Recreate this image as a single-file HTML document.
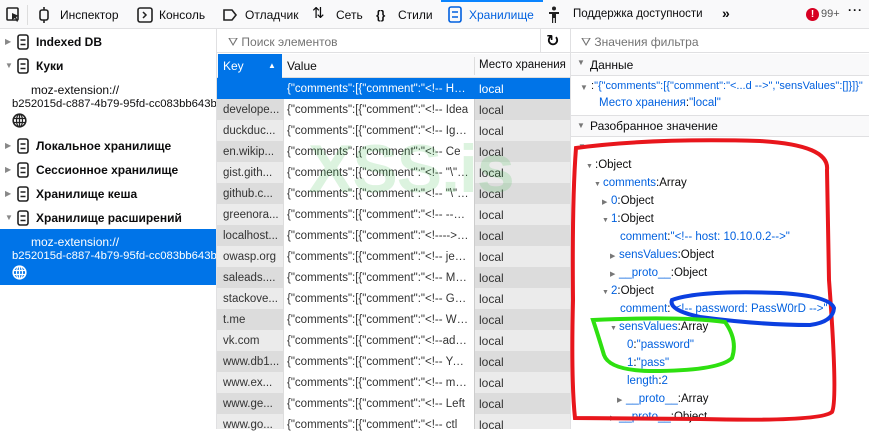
<!DOCTYPE html>
<html><head><meta charset="utf-8">
<style>
*{box-sizing:border-box;margin:0;padding:0}
body{width:869px;height:429px;overflow:hidden;background:#fff;font-family:"Liberation Sans","DejaVu Sans",sans-serif;font-size:12px;color:#0c0c0d;position:relative}
.abs{position:absolute;white-space:nowrap}
.tb{position:absolute;left:0;top:0;width:869px;height:29px;background:#f9f9fa;border-bottom:1px solid #e0e0e2}
.tb span{position:absolute;top:8px;font-size:12px}
.bl{color:#0060df}
.col{position:absolute;line-height:21px;color:#333;font-size:12px}
.col div{overflow:hidden;white-space:nowrap;text-overflow:ellipsis;height:21px}
.tr{font-size:7px;color:#777;display:inline-block;width:9px}
</style></head><body>
<div class="tb">
 <svg class="abs" style="left:6px;top:7px" width="14" height="16"><rect x="1" y="1" width="11" height="12" fill="none" stroke="#222" stroke-width="1.6" rx="1"/><path d="M6 6l7 3-3 1 2 4-1 1-2-4-3 2z" fill="#222"/></svg>
 <div class="abs" style="left:27px;top:5px;width:1px;height:20px;background:#ddd"></div>
 <svg class="abs" style="left:37px;top:7px" width="14" height="16"><rect x="3" y="3" width="8" height="10" rx="2" fill="none" stroke="#222" stroke-width="1.6"/><path d="M7 0v3M7 13v3" stroke="#222" stroke-width="1.6"/></svg>
 <span style="left:60px">Инспектор</span>
 <svg class="abs" style="left:137px;top:7px" width="16" height="16"><rect x="1" y="1" width="14" height="14" rx="2" fill="none" stroke="#222" stroke-width="1.6"/><path d="M6 5l3 3-3 3" fill="none" stroke="#222" stroke-width="1.5"/></svg>
 <span style="left:159px">Консоль</span>
 <svg class="abs" style="left:222px;top:7px" width="16" height="16"><path d="M2 3h8l4 5-4 5H2z" fill="none" stroke="#222" stroke-width="1.6"/></svg>
 <span style="left:245px">Отладчик</span>
 <span style="left:312px;font-size:15px;top:4px">⇅</span>
 <span style="left:336px">Сеть</span>
 <span style="left:376px;font-weight:bold">{}</span>
 <span style="left:398px">Стили</span>
 <div class="abs" style="left:441px;top:0;width:102px;height:2px;background:#0a84ff"></div>
 <svg class="abs" style="left:448px;top:6px" width="14" height="17"><rect x="1" y="1" width="12" height="15" rx="2" fill="none" stroke="#0060df" stroke-width="1.6"/><path d="M4 6h6M4 11h6" stroke="#0060df" stroke-width="1.5"/></svg>
 <span style="left:469px;color:#0060df">Хранилище</span>
 <svg class="abs" style="left:548px;top:6px" width="12" height="18"><circle cx="6" cy="2.5" r="2" fill="#222"/><path d="M1 6h10v2H8v9H6.8v-5H5.2v5H4V8H1z" fill="#222"/></svg>
 <span style="left:573px;font-size:11.5px">Поддержка доступности</span>
 <span style="left:722px;font-weight:bold;font-size:14px;top:5px">»</span>
 <div class="abs" style="left:806px;top:8px;width:13px;height:13px;border-radius:50%;background:#d70022;color:#fff;font-size:10px;text-align:center;line-height:13px;font-weight:bold">!</div>
 <span style="left:821px;font-size:11px;top:8px;color:#555">99+</span>
 <span style="left:848px;top:3px;font-weight:bold;letter-spacing:1px">···</span>
</div>

<!-- left panel -->
<div class="abs" style="left:216px;top:29px;width:1px;height:400px;background:#e0e0e2"></div>
<div class="abs" style="left:0;top:229px;width:216px;height:56px;background:#0074e8"></div>
<div class="abs" style="left:0;top:29px;width:216px;height:400px;overflow:hidden">
 <div style="position:relative;top:-29px">
 <div class="abs" style="left:5px;top:37px;color:#888;font-size:8px">▶</div>
 <div class="abs" style="left:5px;top:61px;color:#888;font-size:8px">▼</div>
 <div class="abs" style="left:5px;top:141px;color:#888;font-size:8px">▶</div>
 <div class="abs" style="left:5px;top:165px;color:#888;font-size:8px">▶</div>
 <div class="abs" style="left:5px;top:189px;color:#888;font-size:8px">▶</div>
 <div class="abs" style="left:5px;top:213px;color:#888;font-size:8px">▼</div>
 <svg class="abs" style="left:17px;top:34px" width="12" height="16"><rect x="1" y="1" width="10" height="14" rx="2" fill="none" stroke="#222" stroke-width="1.6"/><path d="M3.5 6h5M3.5 10.5h5" stroke="#222" stroke-width="1.5"/></svg>
 <svg class="abs" style="left:17px;top:58px" width="12" height="16"><rect x="1" y="1" width="10" height="14" rx="2" fill="none" stroke="#222" stroke-width="1.6"/><path d="M3.5 6h5M3.5 10.5h5" stroke="#222" stroke-width="1.5"/></svg>
 <svg class="abs" style="left:17px;top:138px" width="12" height="16"><rect x="1" y="1" width="10" height="14" rx="2" fill="none" stroke="#222" stroke-width="1.6"/><path d="M3.5 6h5M3.5 10.5h5" stroke="#222" stroke-width="1.5"/></svg>
 <svg class="abs" style="left:17px;top:162px" width="12" height="16"><rect x="1" y="1" width="10" height="14" rx="2" fill="none" stroke="#222" stroke-width="1.6"/><path d="M3.5 6h5M3.5 10.5h5" stroke="#222" stroke-width="1.5"/></svg>
 <svg class="abs" style="left:17px;top:186px" width="12" height="16"><rect x="1" y="1" width="10" height="14" rx="2" fill="none" stroke="#222" stroke-width="1.6"/><path d="M3.5 6h5M3.5 10.5h5" stroke="#222" stroke-width="1.5"/></svg>
 <svg class="abs" style="left:17px;top:210px" width="12" height="16"><rect x="1" y="1" width="10" height="14" rx="2" fill="none" stroke="#222" stroke-width="1.6"/><path d="M3.5 6h5M3.5 10.5h5" stroke="#222" stroke-width="1.5"/></svg>
 <div class="abs" style="left:36px;top:35px;font-weight:bold">Indexed DB</div>
 <div class="abs" style="left:36px;top:59px;font-weight:bold">Куки</div>
 <div class="abs" style="left:31px;top:83px">moz-extension://</div>
 <div class="abs" style="left:12px;top:98px;font-size:11.3px">b252015d-c887-4b79-95fd-cc083bb643b</div>
 <svg class="abs" style="left:12px;top:113px" width="15" height="15"><circle cx="7.5" cy="7.5" r="6.3" fill="none" stroke="#222" stroke-width="1.6"/><path d="M1.5 5.5h12M1.5 9.5h12M7.5 1.2v12.6" stroke="#222" stroke-width="1.3"/><ellipse cx="7.5" cy="7.5" rx="3" ry="6.3" fill="none" stroke="#222" stroke-width="1.2"/></svg>
 <div class="abs" style="left:36px;top:139px;font-weight:bold">Локальное хранилище</div>
 <div class="abs" style="left:36px;top:163px;font-weight:bold">Сессионное хранилище</div>
 <div class="abs" style="left:36px;top:187px;font-weight:bold">Хранилище кеша</div>
 <div class="abs" style="left:36px;top:211px;font-weight:bold">Хранилище расширений</div>
 <div class="abs" style="left:31px;top:235px;color:#fff">moz-extension://</div>
 <div class="abs" style="left:12px;top:250px;color:#fff;font-size:11.3px">b252015d-c887-4b79-95fd-cc083bb643b</div>
 <svg class="abs" style="left:12px;top:265px" width="15" height="15"><circle cx="7.5" cy="7.5" r="6.3" fill="none" stroke="#fff" stroke-width="1.6"/><path d="M1.5 5.5h12M1.5 9.5h12M7.5 1.2v12.6" stroke="#fff" stroke-width="1.3"/><ellipse cx="7.5" cy="7.5" rx="3" ry="6.3" fill="none" stroke="#fff" stroke-width="1.2"/></svg>
 </div>
</div>

<!-- middle -->
<div class="abs" style="left:217px;top:29px;width:353px;height:24px;border-bottom:1px solid #e0e0e2"></div>
<div class="abs" style="left:228px;top:35px;color:#737373">⛛ Поиск элементов</div>
<div class="abs" style="left:540px;top:29px;width:1px;height:24px;background:#e0e0e2"></div>
<div class="abs" style="left:546px;top:31px;font-size:16px;font-weight:bold">↻</div>
<div class="abs" style="left:570px;top:29px;width:1px;height:400px;background:#e0e0e2"></div>
<div class="abs" style="left:217px;top:54px;width:353px;height:24px;background:#f9f9fa;border-bottom:1px solid #ddd"></div>
<div class="abs" style="left:218px;top:54px;width:64px;height:24px;background:#0074e8;color:#fff;line-height:24px;padding-left:5px">Key<span style="position:absolute;left:50px;font-size:8px">▲</span></div>
<div class="abs" style="left:287px;top:59px">Value</div>
<div class="abs" style="left:474px;top:57px;width:1px;height:18px;background:#ddd"></div>
<div class="abs" style="left:479px;top:59px;font-size:11.5px">Место хранения</div>
<div class="abs" style="left:217px;top:99px;width:353px;height:330px">
 <div style="position:absolute;left:0;top:0;width:66px;height:330px;background:linear-gradient(#dcdcdc 0 21px,#ebebeb 21px 42px) 0 0/66px 42px"></div>
 <div style="position:absolute;left:66px;top:0;width:191px;height:330px;background:#fff;border-left:1px solid #ddd"></div>
 <div style="position:absolute;left:257px;top:0;width:96px;height:330px;background:linear-gradient(#dcdcdc 0 21px,#ebebeb 21px 42px) 0 0/96px 42px;border-left:1px solid #ccc"></div>
</div>
<div class="abs" style="left:217px;top:78px;width:353px;height:21px;background:#0074e8"></div>
<div class="col" style="left:223px;top:100px;width:58px;font-size:11.5px">
<div>develope...</div><div>duckduc...</div><div>en.wikip...</div><div>gist.gith...</div><div>github.c...</div><div>greenora...</div><div>localhost...</div><div>owasp.org</div><div>saleads....</div><div>stackove...</div><div>t.me</div><div>vk.com</div><div>www.db1...</div><div>www.ex...</div><div>www.ge...</div><div>www.go...</div></div>
<div class="col" style="left:287px;top:79px;width:183px;font-size:11.5px">
<div style="color:#fff">{"comments":[{"comment":"&lt;!-- Hello world</div>
<div>{"comments":[{"comment":"&lt;!-- Idea</div><div>{"comments":[{"comment":"&lt;!-- Ignore</div><div>{"comments":[{"comment":"&lt;!-- Ce</div><div>{"comments":[{"comment":"&lt;!-- "\" abc</div><div>{"comments":[{"comment":"&lt;!-- "\" abc</div><div>{"comments":[{"comment":"&lt;!-- --&gt; abc</div><div>{"comments":[{"comment":"&lt;!----&gt;" abc</div><div>{"comments":[{"comment":"&lt;!-- jekyll</div><div>{"comments":[{"comment":"&lt;!-- Meta</div><div>{"comments":[{"comment":"&lt;!-- Google</div><div>{"comments":[{"comment":"&lt;!-- WEB</div><div>{"comments":[{"comment":"&lt;!--ads abc</div><div>{"comments":[{"comment":"&lt;!-- Yandex</div><div>{"comments":[{"comment":"&lt;!-- main</div><div>{"comments":[{"comment":"&lt;!-- Left</div><div>{"comments":[{"comment":"&lt;!-- ctl</div></div>
<div class="col" style="left:479px;top:79px;width:80px">
<div style="color:#fff">local</div><div>local</div><div>local</div><div>local</div><div>local</div><div>local</div><div>local</div><div>local</div><div>local</div><div>local</div><div>local</div><div>local</div><div>local</div><div>local</div><div>local</div><div>local</div><div>local</div></div>
<div class="abs" style="left:308px;top:130px;font-size:68px;font-weight:bold;color:rgba(60,190,80,0.18);font-family:'Liberation Sans',sans-serif;letter-spacing:-1px">XSS.is</div>

<!-- right -->
<div class="abs" style="left:571px;top:29px;width:298px;height:24px;border-bottom:1px solid #e0e0e2"></div>
<div class="abs" style="left:581px;top:35px;color:#737373">⛛ Значения фильтра</div>
<div class="abs" style="left:571px;top:54px;width:298px;height:22px;background:#f9f9fa;border-bottom:1px solid #e0e0e2"></div>
<div class="abs" style="left:577px;top:58px;font-size:8px;color:#777">▼</div>
<div class="abs" style="left:590px;top:58px">Данные</div>
<div class="abs" style="left:580px;top:83px;font-size:8px;color:#777">▼</div>
<div class="abs" style="left:591px;top:80px;font-size:11px;width:278px;overflow:hidden"><span>:</span><span class="bl">"{"comments":[{"comment":"&lt;...d --&gt;","sensValues":[]}]}"</span></div>
<div class="abs" style="left:599px;top:97px;font-size:11.5px"><span class="bl">Место хранения</span>:<span class="bl">"local"</span></div>
<div class="abs" style="left:571px;top:115px;width:298px;height:22px;background:#f9f9fa;border-top:1px solid #e0e0e2;border-bottom:1px solid #e0e0e2"></div>
<div class="abs" style="left:577px;top:121px;font-size:8px;color:#777">▼</div>
<div class="abs" style="left:590px;top:119px">Разобранное значение</div>
<div class="abs" style="left:578px;top:142px;font-size:8px;color:#777">▼</div>
<div class="abs" style="font-size:11.5px;line-height:18px;left:0;top:156px">
 <div class="abs" style="left:586px;top:0"><span class="tr">▼</span>:Object</div>
 <div class="abs" style="left:594px;top:18px"><span class="tr">▼</span><span class="bl">comments</span>:Array</div>
 <div class="abs" style="left:602px;top:36px"><span class="tr">▶</span><span class="bl">0</span>:Object</div>
 <div class="abs" style="left:602px;top:54px"><span class="tr">▼</span><span class="bl">1</span>:Object</div>
 <div class="abs" style="left:620px;top:72px"><span class="bl">comment</span>:<span class="bl">"&lt;!-- host: 10.10.0.2--&gt;"</span></div>
 <div class="abs" style="left:610px;top:90px"><span class="tr">▶</span><span class="bl">sensValues</span>:Object</div>
 <div class="abs" style="left:610px;top:108px"><span class="tr">▶</span><span class="bl">__proto__</span>:Object</div>
 <div class="abs" style="left:602px;top:126px"><span class="tr">▼</span><span class="bl">2</span>:Object</div>
 <div class="abs" style="left:620px;top:144px"><span class="bl">comment</span>:<span class="bl">"&lt;!-- password: PassW0rD --&gt;"</span></div>
 <div class="abs" style="left:610px;top:162px"><span class="tr">▼</span><span class="bl">sensValues</span>:Array</div>
 <div class="abs" style="left:627px;top:180px"><span class="bl">0</span>:<span class="bl">"password"</span></div>
 <div class="abs" style="left:627px;top:198px"><span class="bl">1</span>:<span class="bl">"pass"</span></div>
 <div class="abs" style="left:627px;top:216px"><span class="bl">length</span>:<span class="bl">2</span></div>
 <div class="abs" style="left:617px;top:234px"><span class="tr">▶</span><span class="bl">__proto__</span>:Array</div>
 <div class="abs" style="left:610px;top:252px"><span class="tr">▶</span><span class="bl">__proto__</span>:Object</div>
</div>
<svg class="abs" style="left:0;top:0" width="869" height="429">
 <path d="M576 148 Q650 138 760 141 Q830 145 827 170 L829 280 Q838 400 832 412 Q820 422 700 419 Q600 418 575 418 Q571 380 573 300 Q572 200 576 148 Z" fill="none" stroke="#e8161c" stroke-width="4"/>
 <path d="M672 300 Q700 290 780 293 Q830 296 834 308 Q833 322 810 325 Q760 325 700 317 Q668 310 672 300 Z" fill="none" stroke="#0b3fe0" stroke-width="4"/>
 <path d="M593 320 Q680 316 725 322 Q738 340 732 358 Q720 370 660 371 Q610 372 604 355 Q598 335 593 320 Z" fill="none" stroke="#2ee010" stroke-width="4"/>
</svg>
</body></html>
